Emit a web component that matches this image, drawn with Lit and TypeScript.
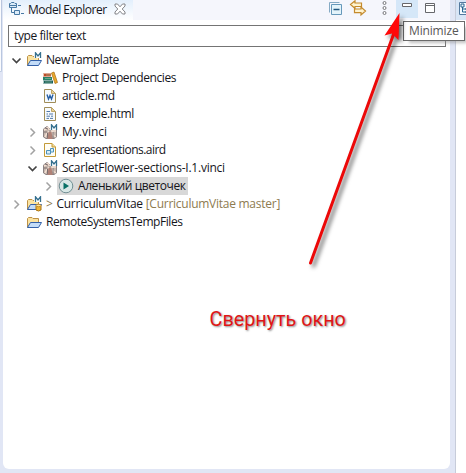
import { LitElement, html, svg, css } from "lit";
import { customElement } from "lit/decorators.js";

const M = svg`<path d="M9.500 6V.8L12 4 14.500 .8V6" fill="none" stroke="#fff" stroke-width="3"/><path d="M9.500 6V.8L12 4 14.500 .8V6" fill="none" stroke="#35708f" stroke-width="1.300"/>`;
const folder = svg`<path d="M1.500 13.500V4.500L2.500 3.500H6L7 4.500H12.500V8" fill="#fbe3a0" stroke="#bd9146"/><path d="M1.500 13.500L4.500 8.500H15.500L12.500 13.500Z" fill="#c3dcf8" stroke="#3461a8"/>`;
const page = svg`<path d="M2.500 1.500H9.500L13.500 5.500V14.500H2.500Z" fill="#f6fafd" stroke="#a08d58"/><path d="M9.500 1.500V5.500H13.500Z" fill="#e9d49b" stroke="#bda467"/>`;
const vinci = svg`<path d="M1.500 5L5 2.500 8 5 11 2.500 14.500 5V13L12 14.500H4L1.500 13Z" fill="#c6b7ae" stroke="#8b8282"/><path d="M2 6L6 3.500 8 7 5 9 3 13M14 7L10 7 11 11 14 13" fill="none" stroke="#f3dfd2" stroke-width="1.500"/><path d="M2 8H5M3 4L6 5M8 6V15M5.500 8.500V14M11 8V14" fill="none" stroke="#7a6e6f"/><path d="M6.500 8H9.500L10.500 15H5.500Z" fill="#b08176"/>${M}`;
const icons: Record<string, unknown> = {
  project: svg`${folder}${M}`,
  folder,
  repo: svg`${folder}${M}<path d="M10 9.500V14Q12.500 16 15 14V9.500" fill="#f0b539" stroke="#a87416"/><ellipse cx="12.500" cy="9.500" rx="2.500" ry="1.200" fill="#ffe398" stroke="#b67f1b" stroke-width=".8"/>`,
  books: svg`<path d="M1 3.500H9V6.500H1L2 5Z" fill="#bf4b24"/><path d="M1 7H10V10H1Z" fill="#258269"/><path d="M1 10.500H11V13.500H1L2 12Z" fill="#17605a"/><path d="M4 5H9M3 8.500H9M3 12H10" stroke="#8db89c" stroke-width=".7"/><path d="M9.500 3L12 2 15.500 12.500 13 13.500Z" fill="#e9a82d" stroke="#a66e15" stroke-width=".7"/>`,
  word: svg`${page}<path d="M5 6.500L6.500 11 8 7.500 9.500 11 11 6.500" fill="none" stroke="#2860a5" stroke-width="1.400"/>`,
  doc: svg`${page}<path d="M4.500 5.500H8M4.500 8H6M7 8H11M4.500 10.200H8M9 10.200H11M4.500 12.400H7M8 12.400H11" stroke="#5279a8"/>`,
  aird: svg`<path d="M2.500 1.500H10L13.500 5V14.500H2.500Z" fill="#fffdf4" stroke="#c39a38"/><path d="M10 1.500V5H13.500" fill="#f4da92" stroke="#c39a38"/><path d="M4.500 8.500H8.500V12H4.500ZM8.500 6.500H11.500V10H8.500Z" fill="#d9edf8" stroke="#4d92bb"/>`,
  vinci,
  play: svg`<circle cx="8" cy="8" r="6.800" fill="#d8e7e6" stroke="#718f94"/><path d="M5.500 4.500L11 8 5.500 11.500Z" fill="#087167"/>`,
};

interface Row { level: number; arrow: "" | "open" | "closed"; icon: string; text: string; spacing: number; suffix?: string; selected?: boolean }
const rows: Row[] = [
  { level: 0, arrow: "open", icon: "project", text: "NewTamplate", spacing: -0.42 },
  { level: 1, arrow: "", icon: "books", text: "Project Dependencies", spacing: -0.38 },
  { level: 1, arrow: "", icon: "word", text: "article.md", spacing: -0.33 },
  { level: 1, arrow: "", icon: "doc", text: "exemple.html", spacing: -0.43 },
  { level: 1, arrow: "closed", icon: "vinci", text: "My.vinci", spacing: 0 },
  { level: 1, arrow: "closed", icon: "aird", text: "representations.aird", spacing: -0.52 },
  { level: 1, arrow: "open", icon: "vinci", text: "ScarletFlower-sections-I.1.vinci", spacing: -0.24 },
  { level: 2, arrow: "closed", icon: "play", text: "Аленький цветочек", spacing: -0.42, selected: true },
  { level: 0, arrow: "closed", icon: "repo", text: "CurriculumVitae", spacing: -0.26, suffix: "[CurriculumVitae master]" },
  { level: 0, arrow: "", icon: "folder", text: "RemoteSystemsTempFiles", spacing: -0.44 },
];

@customElement("app-root")
export class AppRoot extends LitElement {
  static styles = css`
    :host { display: block; position: relative; width: 466px; height: 473px; overflow: hidden; background: #e1e6f5; font: 12px/18px "Open Sans", "Noto Sans", sans-serif; color: #15151b; }
    * { box-sizing: border-box; }
    svg { display: block; flex: none; }
    .layout { display: grid; grid-template-columns: 3px 447px 5px 11px; height: 473px; }
    .edge { width: 2px; height: 72px; background: #fafbfe; border-right: 1px solid #b9c7df; border-bottom: 1px solid #b9c7df; border-radius: 0 0 3px 0; }
    .panel { height: 469px; background: #fff; border-radius: 0 0 6px 6px; overflow: hidden; }
    .bar { display: flex; height: 20px; background: #f5f6fc; }
    .tab { display: flex; width: 130px; height: 20px; padding-left: 6px; background: linear-gradient(#e3effc, #fff); }
    .title { width: 79px; margin-left: 3px; line-height: 19px; letter-spacing: -0.48px; white-space: nowrap; }
    .close { margin: 3px 0 0 7px; }
    .tools { display: flex; margin-left: auto; }
    .filter { height: 22px; margin: 5px 4px 0 5px; border: 1px solid #747474; padding-left: 5px; line-height: 20px; letter-spacing: -0.4px; }
    .tree { padding-top: 4px; }
    .row { display: flex; align-items: center; height: 18px; white-space: pre; }
    .row.l0 { padding-left: 6px; }
    .row.l1 { padding-left: 22px; }
    .row.l2 { padding-left: 38px; }
    .arrow { width: 16px; height: 16px; }
    .item { display: flex; align-items: center; height: 18px; padding: 0 2px 0 1px; }
    .selected { background: #d8d8d8; }
    .label { margin-left: 4px; }
    .git { color: #8e7b50; }
    .prefix { margin-right: 1px; }
    .right { background: #fff; border-left: 1px solid #c7ccda; overflow: hidden; }
    .rtab { height: 20px; padding: 1px 0 0 3px; background: #d8e5f6; }
    .tip { position: absolute; left: 403px; top: 21px; width: 62px; height: 20px; border: 1px solid #6b6b6b; background: #fff; color: #575757; padding-left: 5px; line-height: 18px; letter-spacing: -0.15px; box-shadow: 4px 4px 3px -2px #8888; white-space: nowrap; }
    .pointer { position: absolute; inset: 0; filter: drop-shadow(3px 3px 2px #0009); }
    .caption { position: absolute; left: 209.500px; top: 308px; font: 19.800px/24px Roboto, sans-serif; color: #e01515; text-shadow: 1px 1px 2px #0007; white-space: nowrap; }
  `;

  private hierarchy() {
    return svg`<path d="M.5 3.500H1.500L2.500 2.500H5L6 3.500H7.500V7.500H.5ZM5.500 10.500H10.500V14.500H5.500Z" fill="#dcecf9" stroke="#4779a5"/><path d="M2.500 8V12.500H5M9 5.500H12M12 13.500H15M1 5.500H7" fill="none" stroke="#4779a5"/>`;
  }

  private row(r: Row) {
    return html`<div class="row l${r.level}">
      <svg class="arrow" viewBox="0 0 16 16">${r.arrow === "open"
        ? svg`<path d="M3.500 6.500L7.500 10.500 11.500 6.500" fill="none" stroke="#444" stroke-width="1.700"/>`
        : r.arrow ? svg`<path d="M5.500 4.500L9.500 8.500 5.500 12.500" fill="none" stroke="#a2a2a2" stroke-width="1.500"/>` : ""}</svg
      ><div class="item ${r.selected ? "selected" : ""}"><svg width="16" height="16" viewBox="0 0 16 16">${icons[r.icon]}</svg
      ><span class="label" style="letter-spacing:${r.spacing}px">${r.suffix ? html`<span class="git prefix">&gt; </span>` : ""}${r.text}${r.suffix ? html`<span class="git"> ${r.suffix}</span>` : ""}</span></div></div>`;
  }

  render() {
    return html`<div class="layout">
        <div class="edge"></div>
        <div class="panel">
          <div class="bar">
            <div class="tab"><svg width="16" height="16" viewBox="0 0 16 16">${this.hierarchy()}</svg><span class="title">Model Explorer</span>
              <svg class="close" width="12" height="12" viewBox="0 0 12 12"><path d="M1 1H3.500L6 3.800 8.500 1H11V3L8.200 6 11 9V11H8.500L6 8.200 3.500 11H1V9L3.800 6 1 3Z" fill="#fff" stroke="#77777c" stroke-width=".9"/></svg>
            </div>
            <svg class="tools" width="122" height="20" viewBox="328 0 122 20">
              <path d="M329.500 12.500V2.500H339.500" fill="none" stroke="#85aac4"/><path d="M331.500 4.500H341.500V14.500H331.500Z" fill="#e4f4fb" stroke="#6698ba"/><path d="M333.500 9.500H339.500" stroke="#21577f" stroke-width="1.500"/>
              <path d="M350.500 4.500L355 .8V3H361.500V6.500H355V8.500ZM365.500 11L361 15V12.700H354.500V9H361V7Z" fill="#fff3cf" stroke="#c48a2c" stroke-width="1.200"/>
              <g fill="#fff" stroke="#77777b"><circle cx="384.500" cy="3" r="1.500"/><circle cx="384.500" cy="8" r="1.500"/><circle cx="384.500" cy="13" r="1.500"/></g>
              <path d="M396 0H418V18H396Z" fill="#d5e7f8"/><path d="M402.500 3.500H411.500V6.500H402.500Z" fill="#fff" stroke="#66676b"/>
              <path d="M425.500 3.500H434.500V12.500H425.500ZM425.500 5.500H434.500" fill="#fff" stroke="#66676b"/>
            </svg>
          </div>
          <div class="filter">type filter text</div>
          <div class="tree">${rows.map((r) => this.row(r))}</div>
        </div>
        <div></div>
        <div class="right"><div class="rtab"><svg width="16" height="16" viewBox="0 0 16 16"><path d="M.5 1.500H10.500V13.500H.5Z" fill="#f4faff" stroke="#54799e"/><path d="M2 3H5V6H2ZM3.500 6V11H7M3.500 8H7M7 7H10V9H7ZM7 10H10V12H7Z" fill="none" stroke="#28648f"/></svg></div></div>
      </div>
      <div class="tip">Minimize</div>
      <svg class="pointer" width="466" height="473" viewBox="0 0 466 473"><path d="M310.500 263L394 33" stroke="#ec0808" stroke-width="3" stroke-linecap="round"/><path d="M399.500 13L384.500 35.500 392 33.500 398.500 40Z" fill="#ff0808"/></svg>
      <div class="caption">Свернуть окно</div>`;
  }
}
